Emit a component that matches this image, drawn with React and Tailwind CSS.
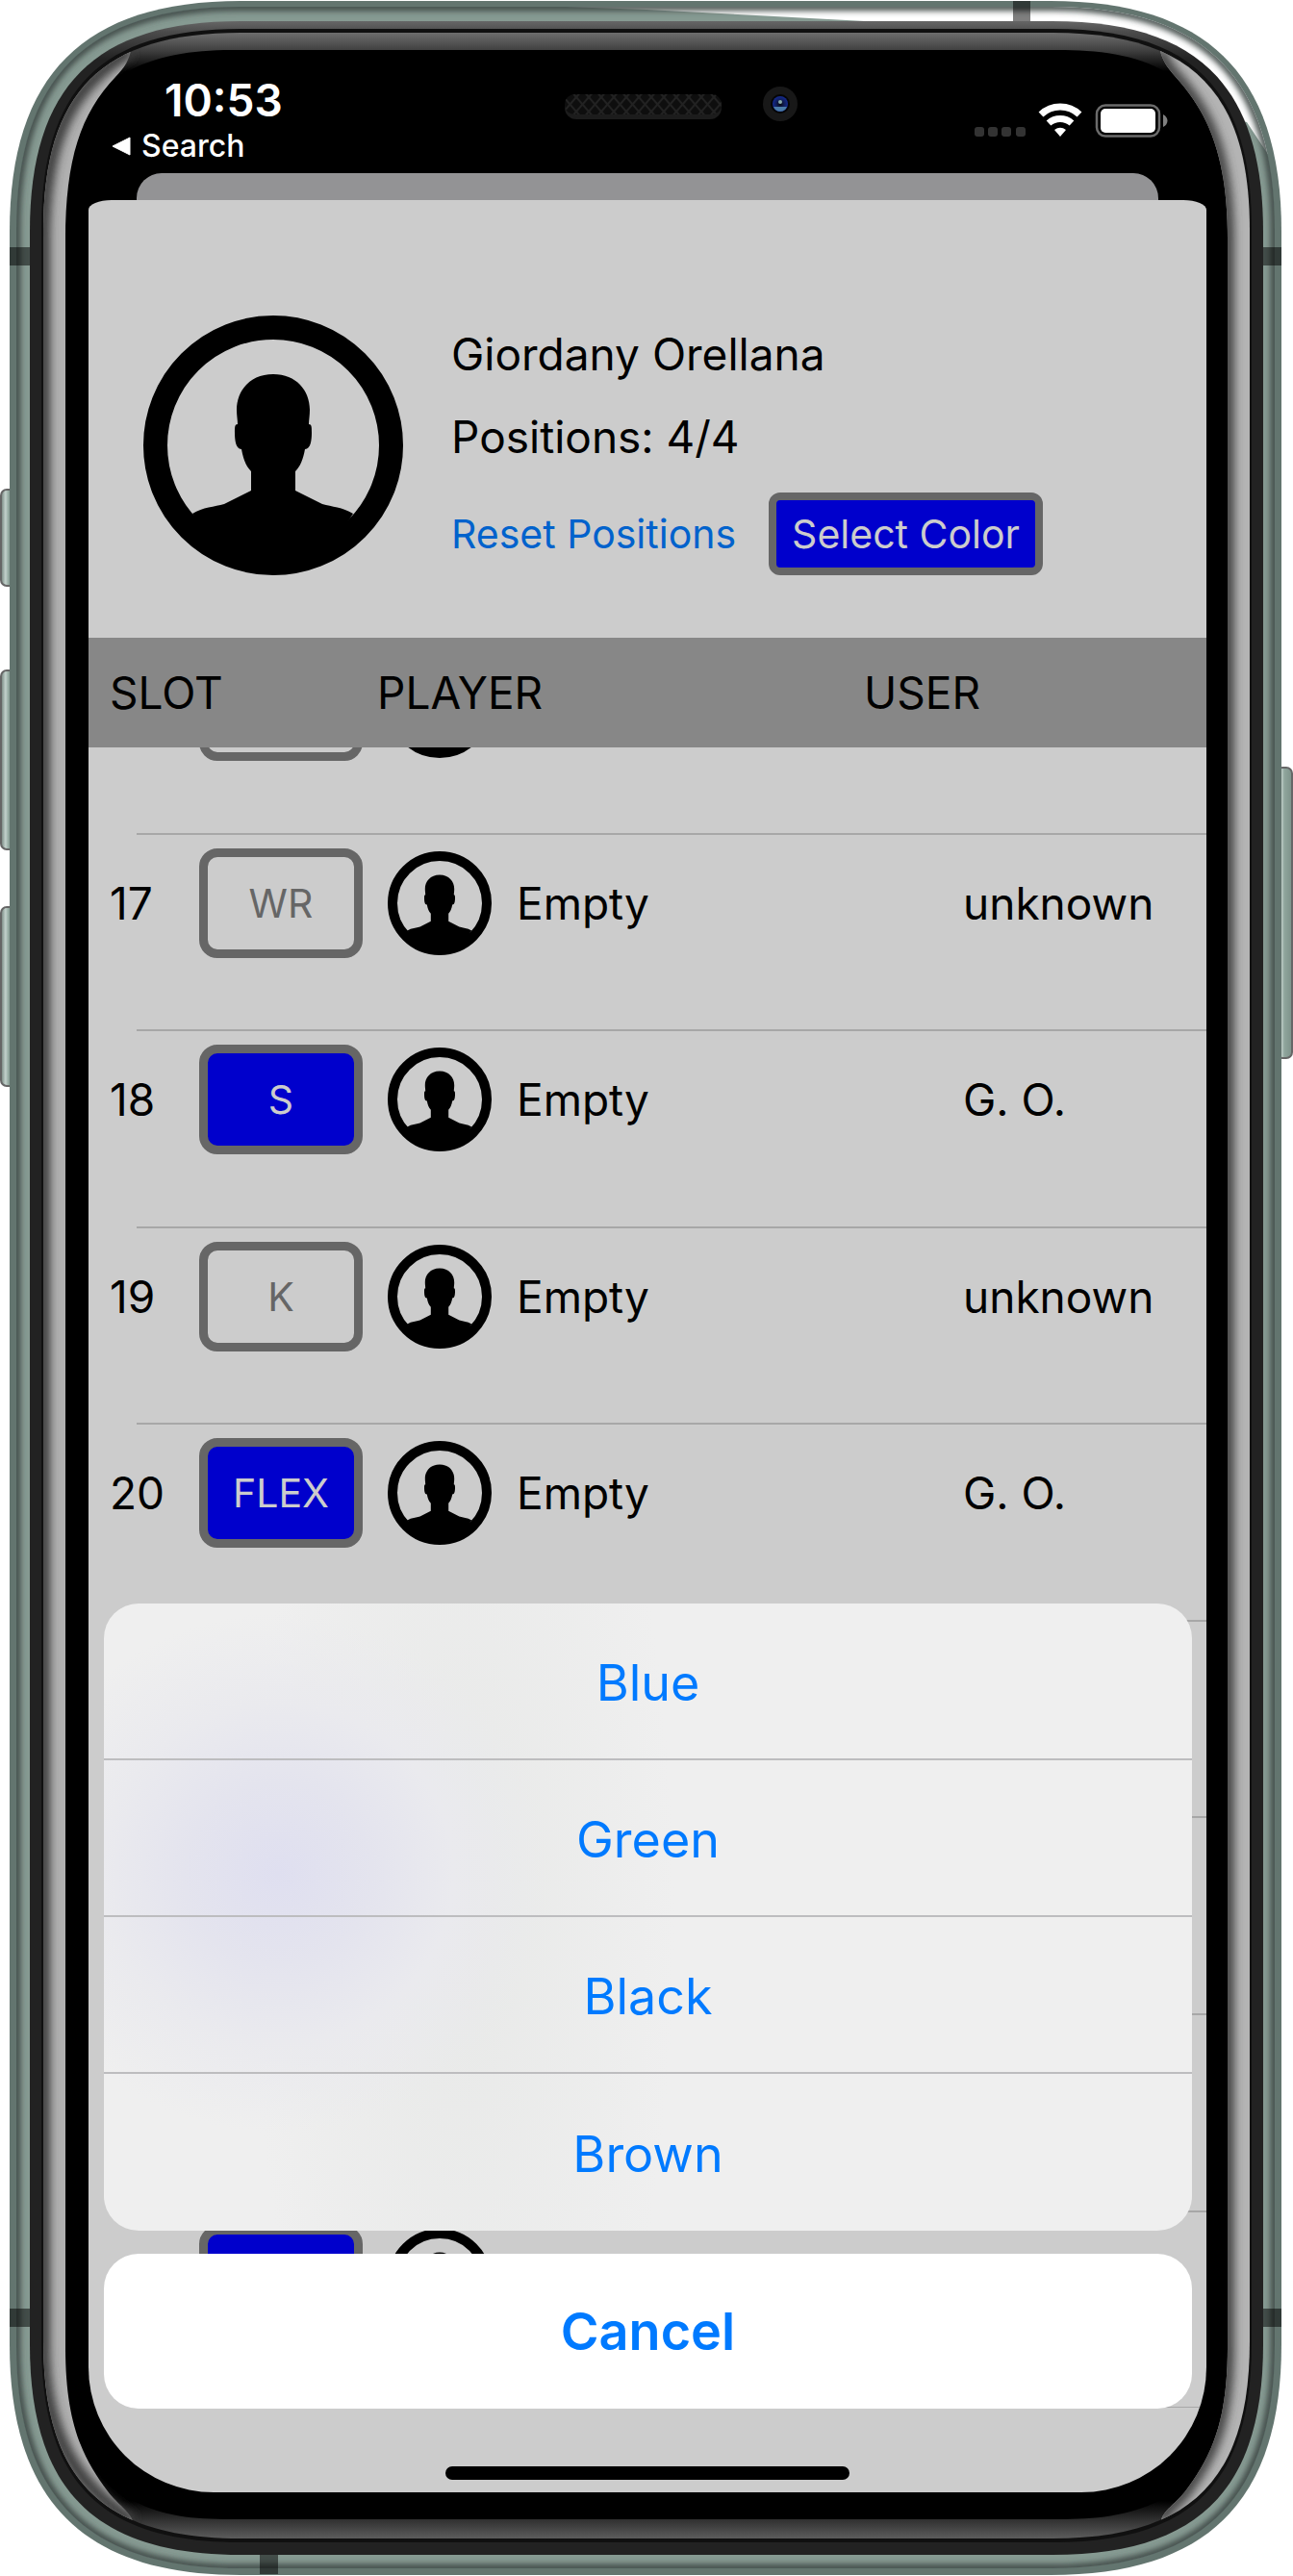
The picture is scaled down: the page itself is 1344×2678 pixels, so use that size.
const F = 'Inter, "Liberation Sans", sans-serif';

function shape(x1, y1, x2, y2, d) {
  const a = 240 - d;
  const b = Math.max(20, 77 - 0.448 * d);
  return `M${x1 + a} ${y1}H${x2 - a}C${x2 - b} ${y1} ${x2} ${y1 + b} ${x2} ${y1 + a}V${y2 - a}C${x2} ${y2 - b} ${x2 - b} ${y2} ${x2 - a} ${y2}H${x1 + a}C${x1 + b} ${y2} ${x1} ${y2 - b} ${x1} ${y2 - a}V${y1 + a}C${x1} ${y1 + b} ${x1 + b} ${y1} ${x1 + a} ${y1}Z`;
}

const RING = shape(17, 7, 1325, 2670, 8);
const BEZEL = shape(31, 22, 1313, 2656, 21);
const GLASS = shape(45, 34, 1299, 2639, 35);

function DeviceFrame() {
  return (
    <svg aria-hidden="true" viewBox="0 0 1344 2678" preserveAspectRatio="none" className="absolute inset-0 h-full w-full">
      <defs>
        <clipPath id="ring"><path d={RING} /></clipPath>
        <clipPath id="glass"><path d={GLASS} /></clipPath>
        <clipPath id="rightBand"><path d="M1344 53H1206C1208 62 1213 70 1222 80C1258 120 1276 165 1276 250V2440C1276 2520 1258 2555 1232 2590C1222 2603 1209 2610 1207 2620H1344Z" /></clipPath>
        <linearGradient id="btn"><stop offset="0" stopColor="#6f7f79" /><stop offset=".3" stopColor="#c3d2cc" /><stop offset=".5" stopColor="#8fa59c" /><stop offset="1" stopColor="#7d928a" /></linearGradient>
        <linearGradient id="bezel" gradientUnits="userSpaceOnUse" x1="0" y1="22" x2="0" y2="62"><stop offset="0" stopColor="#666" /><stop offset=".3" stopColor="#4a4a4a" /><stop offset="1" stopColor="#222" /></linearGradient>
        <linearGradient id="topGlow" gradientUnits="userSpaceOnUse" x1="0" y1="34" x2="0" y2="74"><stop offset="0" stopColor="#6e6e6e" /><stop offset=".45" stopColor="#414141" /><stop offset="1" stopColor="#000" /></linearGradient>
        <linearGradient id="bottomGlow" gradientUnits="userSpaceOnUse" x1="0" y1="2639" x2="0" y2="2600"><stop offset="0" stopColor="#5c5c5c" /><stop offset=".5" stopColor="#303030" /><stop offset="1" stopColor="#000" /></linearGradient>
        <filter id="soft" filterUnits="userSpaceOnUse" x="0" y="0" width="1344" height="2678"><feGaussianBlur stdDeviation="5" /></filter>
        <filter id="soft3" filterUnits="userSpaceOnUse" x="0" y="0" width="1344" height="2678"><feGaussianBlur stdDeviation="3" /></filter>
      </defs>
      <g fill="url(#btn)" stroke="#666" strokeWidth="2">
        <rect x="1" y="509" width="16" height="100" rx="6" />
        <rect x="1" y="697" width="16" height="186" rx="6" />
        <rect x="1" y="943" width="16" height="186" rx="6" />
        <rect x="1327" y="798" width="16" height="302" rx="6" />
      </g>
      <path d={shape(10, 1, 1332, 2677, 0)} fill="#63756f" />
      <g clipPath="url(#ring)">
        <path d={RING} fill="#869a92" />
        <path d="M587 7L672 10L899 22L1296 127L1319 162L1344 0Z" fill="#fff" />
        <path d={RING} fill="none" stroke="#3c4744" strokeWidth="8" filter="url(#soft3)" />
      </g>
      <g fill="#000" fillOpacity=".5">
        <path d="M10 257H33V276H10ZM10 2400H33V2419H10ZM1311 257H1332V276H1311ZM1311 2400H1332V2419H1311ZM1053 1H1071V24H1053ZM270 2654H289V2676H270Z" />
      </g>
      <path d={BEZEL} fill="url(#bezel)" />
      <path d={shape(43, 30, 1301, 2643, 33)} fill="#101010" />
      <g clipPath="url(#glass)">
        <path d={GLASS} fill="#000" />
        <path d="M100 20H1244V76H1214C1180 56 1140 52 1100 52H240C200 52 160 58 130 76H100Z" fill="url(#topGlow)" />
        <path d="M100 2660H1244V2600H1205C1170 2616 1140 2619 1100 2619H240C200 2619 170 2616 139 2600H100Z" fill="url(#bottomGlow)" />
        <path d="M0 53H136C134 62 130 70 120 80C84 118 68 165 68 250V2440C68 2520 86 2555 112 2590C122 2603 136 2612 138 2621H0Z" fill="#b0b0b0" />
        <g clipPath="url(#rightBand)">
          <rect x="1180" width="164" height="2678" fill="#b4b4b4" />
          <path d="M1206 53C1208 62 1213 70 1222 80C1258 120 1276 165 1276 250V2440C1276 2520 1258 2555 1232 2590C1222 2603 1209 2610 1207 2620" fill="none" stroke="#444" strokeWidth="14" filter="url(#soft)" />
        </g>
        <path d="M136 53C70 90 45 150 45 250V2440C45 2530 80 2585 138 2621" fill="none" stroke="#3c3c3c" strokeWidth="14" filter="url(#soft)" />
      </g>
    </svg>
  );
}

function Avatar({ className }) {
  return (
    <svg role="img" aria-label="Player photo" viewBox="0 0 270 270" className={className}>
      <circle cx="135" cy="135" r="122.5" fill="none" stroke="#000" strokeWidth="25" />
      <path d="M135 61C111 61 97 78 97 98C97 104 98 109 98 113C95 113 95 116 95 122C95 129 96 139 102 139C104 150 107 157 112 162V182L84 196C74 199 62 199 51 206A96 96 0 0 0 218 206C207 199 196 199 186 196L158 182V162C163 157 166 150 168 139C174 139 175 129 175 122C175 116 175 113 172 113C172 109 173 104 173 98C173 78 159 61 135 61Z" />
    </svg>
  );
}

function Notch() {
  return (
    <svg aria-hidden="true" viewBox="0 0 246 44" className="absolute left-[494px] top-[86px] h-[44px] w-[246px]">
      <defs>
        <pattern id="mesh" width="13" height="15" patternUnits="userSpaceOnUse"><path d="M0 0L13 15M13 0L0 15" stroke="#222" strokeWidth="2" /></pattern>
        <radialGradient id="lens"><stop offset="0" stopColor="#05060c" /><stop offset=".5" stopColor="#101d55" /><stop offset="1" stopColor="#142a90" /></radialGradient>
      </defs>
      <rect x="1" y="14" width="163" height="24" rx="12" fill="#1c1c1c" />
      <rect x="1" y="12" width="163" height="21" rx="10" fill="#0e0e0e" />
      <rect x="1" y="12" width="163" height="21" rx="10" fill="url(#mesh)" />
      <circle cx="225" cy="22" r="18" fill="#181818" />
      <circle cx="225" cy="22" r="10" fill="#050505" />
      <circle cx="225" cy="22" r="8" fill="url(#lens)" />
      <path d="M218 25A7.500 7.500 0 0 0 232 25L228 25H222Z" fill="#4a7ba8" />
      <circle cx="225" cy="20" r="2" fill="#8aa" />
    </svg>
  );
}

function StatusBar() {
  return (
    <div className="relative h-[180px]">
      <p className="absolute left-[79px] top-[77px] text-[46px] leading-[54px] font-semibold text-white">10:53</p>
      <button type="button" className="absolute left-[24px] top-[134px] flex items-center gap-[11px] text-[32px] leading-[36px] font-medium text-white">
        <svg aria-hidden="true" viewBox="0 0 20 20" className="size-[20px]"><path d="M1 10L19 1V19Z" fill="#fff" stroke="#fff" strokeLinejoin="round" /></svg>
        Search
      </button>
      <Notch />
      <svg role="img" aria-label="No signal, Wi-Fi connected, battery full" viewBox="0 0 204 40" className="absolute right-[38px] top-[105px] h-[40px] w-[204px]">
        <g fill="#333"><rect x="1" y="27" width="10" height="10" rx="3" /><rect x="15" y="27" width="10" height="10" rx="3" /><rect x="29" y="27" width="10" height="10" rx="3" /><rect x="44" y="27" width="10" height="10" rx="3" /></g>
        <g fill="none" stroke="#fff" strokeWidth="7"><path d="M70 14A29 29 0 0 1 110 14" /><path d="M78 23A18 18 0 0 1 102 23" /></g>
        <path d="M90 37L84 30A10 10 0 0 1 96 30Z" fill="#fff" />
        <rect x="128" y="4.500" width="65" height="32" rx="9" fill="none" stroke="#6b6b6b" strokeWidth="2.500" />
        <rect x="132" y="8" width="57" height="25" rx="5" fill="#fff" />
        <path d="M197 14C203 17 203 24 197 27Z" fill="#808080" />
      </svg>
    </div>
  );
}

const ROWS = [
  { slot: 16 },
  { slot: 17, position: 'WR', player: 'Empty', user: 'unknown' },
  { slot: 18, position: 'S', player: 'Empty', user: 'G. O.', mine: true },
  { slot: 19, position: 'K', player: 'Empty', user: 'unknown' },
  { slot: 20, position: 'FLEX', player: 'Empty', user: 'G. O.', mine: true },
  { slot: 21 },
  { slot: 22, mine: true },
  { slot: 23 },
  { slot: 24, mine: true },
];

function SlotRow({ slot, position, player, user, mine }) {
  return (
    <tr className="relative grid min-h-0 flex-1 grid-cols-[93px_196px_1fr_253px] items-start pl-[22px] pt-[15px] text-[46px] leading-[114px] after:absolute after:-bottom-px after:left-[50px] after:right-0 after:h-[2px] after:bg-[#a7a7a7]">
      <td>{player && slot}</td>
      <td>
        <button
          type="button"
          aria-label={`Slot ${slot}`}
          className={
            mine
              ? 'block h-[114px] w-[170px] rounded-[19px] border-[9px] border-[#666] bg-[#0000cc] text-[41px] leading-[96px] text-[#ccc]'
              : 'block h-[114px] w-[170px] rounded-[19px] border-[9px] border-[#666] text-[41px] leading-[96px] text-[#666]'
          }
        >
          {position}
        </button>
      </td>
      <td className="flex h-[114px] items-center gap-[26px]">
        <Avatar className="size-[108px] shrink-0" />
        <span>{player}</span>
      </td>
      <td>{user}</td>
    </tr>
  );
}

function ActionSheet() {
  return (
    <div role="dialog" aria-label="Select Color" className="absolute bottom-[87px] left-[16px] right-[15px] flex flex-col gap-[24px] text-[#007aff]">
      <div className="flex flex-col divide-y-2 divide-[#bdbdbf] overflow-hidden rounded-[36px] bg-[#efefef] bg-[radial-gradient(ellipse_280px_270px_at_16%_43%,#dfdff0,#e4e4ee_35%,#eaeaee_65%,transparent),radial-gradient(ellipse_220px_700px_at_33%_50%,#e8e9e8,transparent)]">
        {['Blue', 'Green', 'Black', 'Brown'].map((c) => (
          <button key={c} type="button" className="h-[163px] pt-[4px] text-[52px] leading-[60px]">{c}</button>
        ))}
      </div>
      <button type="button" className="h-[161px] rounded-[36px] bg-white text-[54px] leading-[60px] font-semibold">Cancel</button>
    </div>
  );
}

export default function App() {
  return (
    <div className="relative bg-white pb-[87px] pl-[92px] pr-[90px] text-black" style={{ fontFamily: F }}>
      <DeviceFrame />
      <main className="relative overflow-hidden rounded-b-[130px]">
        <StatusBar />
        <div className="mx-[50px] h-[28px] rounded-t-[26px] bg-[#939395]" />
        <div className="bg-[#ccc] pb-[88px] [border-radius:24px_24px_0_0/10px_10px_0_0]">
          <section className="flex h-[455px] items-start gap-[50px] pl-[57px] pt-[120px]">
            <Avatar className="size-[270px] shrink-0" />
            <div className="flex flex-col items-start pt-[12px]">
              <h1 className="text-[46px] leading-[56px]">Giordany Orellana</h1>
              <p className="mt-[30px] text-[46px] leading-[56px]">Positions: 4/4</p>
              <div className="mt-[30px] flex items-center gap-[34px] text-[41px] leading-[48px]">
                <button type="button" className="text-[#0062cc]">Reset Positions</button>
                <button type="button" className="h-[86px] rounded-[12px] border-[8px] border-[#666] bg-[#0000cc] px-[16px] text-[#ccc]">Select Color</button>
              </div>
            </div>
          </section>
          <table className="flex flex-col text-left">
            <thead className="relative block bg-[#878787]">
              <tr className="grid h-[114px] grid-cols-[278px_1fr_356px] items-center pl-[22px] text-[46px]">
                <th className="font-normal">SLOT</th>
                <th className="font-normal">PLAYER</th>
                <th className="font-normal">USER</th>
              </tr>
            </thead>
            <tbody className="flex h-[1726px] flex-col overflow-hidden">
              <tr aria-hidden="true" className="-mt-[115px]" />
              {ROWS.map((row) => (
                <SlotRow key={row.slot} {...row} />
              ))}
            </tbody>
          </table>
        </div>
        <ActionSheet />
        <div className="absolute bottom-[13px] left-1/2 h-[14px] w-[420px] -translate-x-1/2 rounded-full bg-black" />
      </main>
    </div>
  );
}
